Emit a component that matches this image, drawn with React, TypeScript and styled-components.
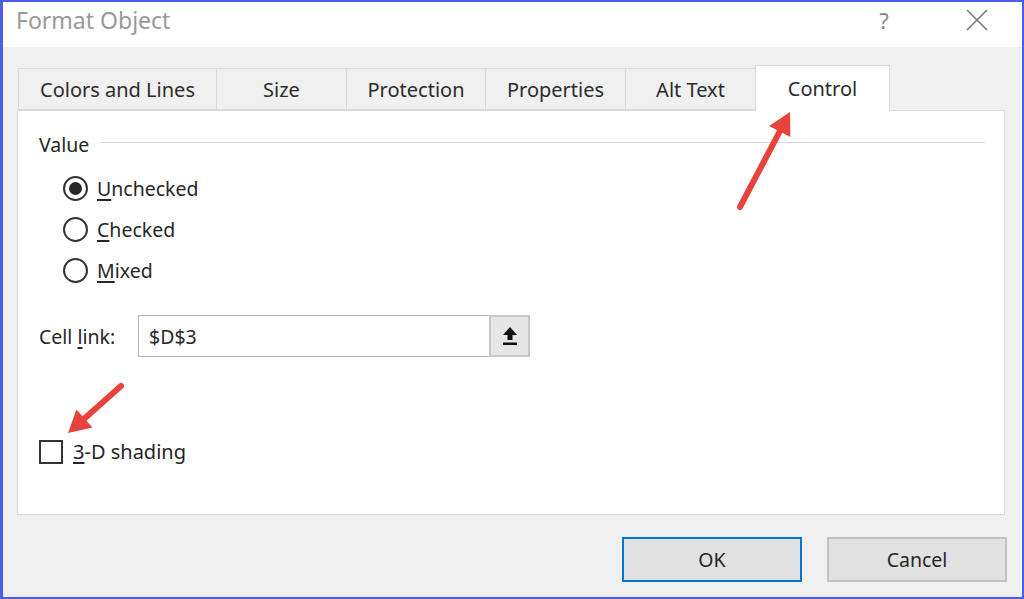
import React from 'react';
import styled, { createGlobalStyle } from 'styled-components';

const GlobalStyle = createGlobalStyle`
  html, body { margin: 0; padding: 0; background: #ffffff; }
  body { font-family: "Noto Sans", "Open Sans", sans-serif; }
  * { box-sizing: border-box; }
`;

const Window = styled.div`
  position: relative;
  width: 1024px;
  height: 599px;
  display: flex;
  flex-direction: column;
  border: 2px solid #4b5ee6;
  border-left-width: 3px;
  background: #f0f0f0;
  color: #262626;
`;

const TitleBar = styled.div`
  height: 48px;
  background: #ffffff;
  display: flex;
  align-items: center;
  padding: 0 0 10px 13px;
`;

const Title = styled.div`
  flex: 1;
  font-size: 23px;
  color: #9a9a9a;
`;

const TitleButton = styled.div<{ $w: number }>`
  width: ${p => p.$w}px;
  display: flex;
  justify-content: center;
  color: #8a8a8a;
  font-size: 22px;
`;

const Body = styled.div`
  flex: 1;
  display: flex;
  flex-direction: column;
  padding: 18px 15px 15px 14px;
`;

const TabStrip = styled.div`
  display: flex;
  align-items: flex-end;
  height: 45px;
  padding-left: 1px;
  position: relative;
  z-index: 1;
`;

const Tab = styled.div<{ $w: number; $active?: boolean }>`
  width: ${p => p.$w}px;
  height: ${p => (p.$active ? 46 : 42)}px;
  margin-bottom: ${p => (p.$active ? -1 : 0)}px;
  display: flex;
  align-items: center;
  justify-content: center;
  font-size: 20px;
  color: #2b2b2b;
  background: ${p => (p.$active ? '#ffffff' : '#f0f0f0')};
  border: 1px solid #d9d9d9;
  border-right-width: ${p => (p.$active ? 1 : 0)}px;
  border-bottom: ${p => (p.$active ? 'none' : '1px solid #d9d9d9')};
  padding-bottom: ${p => (p.$active ? 1 : 0)}px;
`;

const Panel = styled.div`
  height: 405px;
  width: 988px;
  background: #ffffff;
  border: 1px solid #d9d9d9;
  padding: 20px 19px 0 21px;
  display: flex;
  flex-direction: column;
`;

const GroupHeader = styled.div`
  display: flex;
  align-items: center;
  gap: 10px;
  font-size: 19.5px;
  height: 26px;
`;

const GroupRule = styled.div`
  flex: 1;
  height: 1px;
  background: #dcdcdc;
  margin-top: -3px;
`;

const RadioList = styled.div`
  display: flex;
  flex-direction: column;
  gap: 16px;
  padding: 19px 0 0 24px;
`;

const RadioRow = styled.label`
  display: flex;
  align-items: center;
  gap: 9px;
  font-size: 19.5px;
  height: 25px;
`;

const RadioCircle = styled.span<{ $checked?: boolean }>`
  width: 25px;
  height: 25px;
  border-radius: 50%;
  border: 2px solid #333333;
  display: flex;
  align-items: center;
  justify-content: center;
  &::after {
    content: '';
    width: 13px;
    height: 13px;
    border-radius: 50%;
    background: ${p => (p.$checked ? '#262626' : 'transparent')};
  }
`;

const Key = styled.span`
  text-decoration: underline;
  text-underline-offset: 3px;
  text-decoration-thickness: 1.5px;
`;

const LinkRow = styled.div`
  display: flex;
  align-items: center;
  gap: 18px;
  margin-top: 32px;
  font-size: 19.5px;
`;

const LinkLabel = styled.span`
  width: 81px;
`;

const LinkField = styled.div`
  width: 392px;
  height: 42px;
  display: flex;
  border: 1px solid #b5b5b5;
  background: #ffffff;
`;

const LinkValue = styled.div`
  flex: 1;
  display: flex;
  align-items: center;
  padding-left: 10px;
  font-size: 19.5px;
`;

const RefButton = styled.div`
  width: 41px;
  display: flex;
  align-items: center;
  justify-content: center;
  background: #e6e6e6;
  border: 2px solid #c8c8c8;
  margin: -1px -1px -1px 0;
`;

const ShadingRow = styled.label`
  display: flex;
  align-items: center;
  gap: 10px;
  margin-top: 81px;
  font-size: 20px;
`;

const CheckSquare = styled.span`
  width: 24px;
  height: 24px;
  border: 2px solid #333333;
  background: #ffffff;
`;

const Footer = styled.div`
  display: flex;
  justify-content: flex-end;
  gap: 25px;
  margin-top: 22px;
`;

const DialogButton = styled.div<{ $default?: boolean }>`
  width: 180px;
  height: 45px;
  display: flex;
  align-items: center;
  justify-content: center;
  font-size: 19.5px;
  color: #262626;
  background: #e1e1e1;
  border: ${p => (p.$default ? '2px solid #0a74d6' : '2px solid #c2c2c2')};
`;

const Arrow = styled.svg`
  position: absolute;
  overflow: visible;
  pointer-events: none;
`;

const UploadIcon = () => (
  <svg width="16" height="20" viewBox="0 0 16 20">
    <path d="M8 1 L15 9 L10.5 9 L10.5 14 L5.5 14 L5.5 9 L1 9 Z" fill="#111" />
    <rect x="1" y="16.5" width="14" height="2.5" fill="#111" />
  </svg>
);

const RedArrow = ({ x1, y1, x2, y2 }: { x1: number; y1: number; x2: number; y2: number }) => {
  const ang = Math.atan2(y2 - y1, x2 - x1);
  const len = 22;
  const wing = 12;
  const bx = x2 - Math.cos(ang) * len;
  const by = y2 - Math.sin(ang) * len;
  const px = -Math.sin(ang) * wing;
  const py = Math.cos(ang) * wing;
  return (
    <Arrow width="1024" height="599" style={{ left: -3, top: -2 }}>
      <line x1={x1} y1={y1} x2={bx} y2={by} stroke="#e8423d" strokeWidth="6" strokeLinecap="round" />
      <polygon points={`${x2},${y2} ${bx + px},${by + py} ${bx - px},${by - py}`} fill="#e8423d" />
    </Arrow>
  );
};

const tabs = [
  { label: 'Colors and Lines', w: 198 },
  { label: 'Size', w: 130 },
  { label: 'Protection', w: 139 },
  { label: 'Properties', w: 140 },
  { label: 'Alt Text', w: 130 },
  { label: 'Control', w: 135, active: true },
];

export default function App() {
  return (
    <>
      <GlobalStyle />
      <Window>
        <TitleBar>
          <Title>Format Object</Title>
          <TitleButton $w={40} style={{ marginRight: 50 }}>?</TitleButton>
          <TitleButton $w={46} style={{ marginRight: 22 }}>
            <svg width="22" height="22" viewBox="0 0 22 22">
              <path d="M1 1 L21 21 M21 1 L1 21" stroke="#7a7a7a" strokeWidth="1.6" />
            </svg>
          </TitleButton>
        </TitleBar>
        <Body>
          <TabStrip>
            {tabs.map(t => (
              <Tab key={t.label} $w={t.w} $active={t.active}>
                {t.label}
              </Tab>
            ))}
          </TabStrip>
          <Panel>
            <GroupHeader>
              <span>Value</span>
              <GroupRule />
            </GroupHeader>
            <RadioList>
              <RadioRow>
                <RadioCircle $checked />
                <span><Key>U</Key>nchecked</span>
              </RadioRow>
              <RadioRow>
                <RadioCircle />
                <span><Key>C</Key>hecked</span>
              </RadioRow>
              <RadioRow>
                <RadioCircle />
                <span><Key>M</Key>ixed</span>
              </RadioRow>
            </RadioList>
            <LinkRow>
              <LinkLabel>Cell <Key>l</Key>ink:</LinkLabel>
              <LinkField>
                <LinkValue>$D$3</LinkValue>
                <RefButton>
                  <UploadIcon />
                </RefButton>
              </LinkField>
            </LinkRow>
            <ShadingRow>
              <CheckSquare />
              <span><Key>3</Key>-D shading</span>
            </ShadingRow>
          </Panel>
          <Footer>
            <DialogButton $default>OK</DialogButton>
            <DialogButton>Cancel</DialogButton>
          </Footer>
        </Body>
        <RedArrow x1={740} y1={207} x2={790} y2={112} />
        <RedArrow x1={121} y1={386} x2={68} y2={433} />
      </Window>
    </>
  );
}
